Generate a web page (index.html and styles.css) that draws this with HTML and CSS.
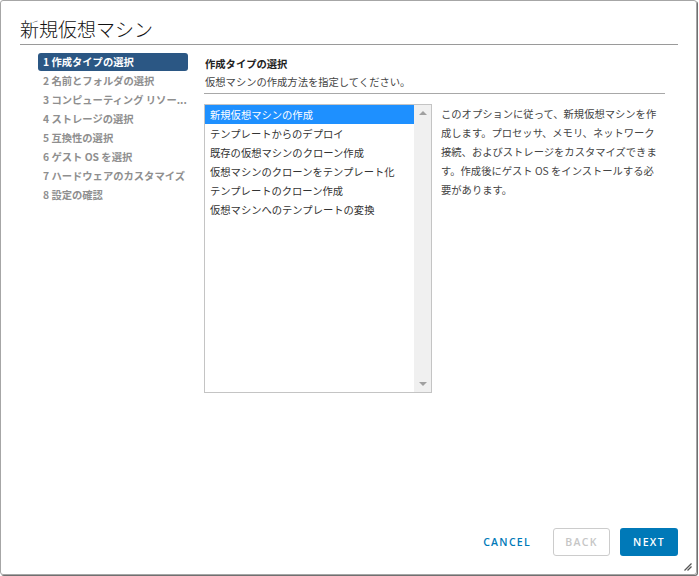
FILE: index.html
```html
<!DOCTYPE html>
<html lang="ja">
<head>
<meta charset="utf-8">
<title>新規仮想マシン</title>
<link rel="stylesheet" href="styles.css">
</head>
<body>
<div class="dialog">
  <header class="dlg-header">
    <h1 class="dlg-title">新規仮想マシン</h1>
  </header>
  <div class="dlg-body">
    <nav class="steps">
      <div class="step active">1 作成タイプの選択</div>
      <div class="step">2 名前とフォルダの選択</div>
      <div class="step" title="3 コンピューティング リソースの選択">3 コンピューティング リソー...</div>
      <div class="step">4 ストレージの選択</div>
      <div class="step">5 互換性の選択</div>
      <div class="step">6 ゲスト OS を選択</div>
      <div class="step">7 ハードウェアのカスタマイズ</div>
      <div class="step">8 設定の確認</div>
    </nav>
    <main class="content">
      <div class="content-head">
        <div class="content-title">作成タイプの選択</div>
        <div class="content-sub">仮想マシンの作成方法を指定してください。</div>
      </div>
      <div class="content-row">
        <div class="listbox">
          <ul class="options">
            <li class="selected">新規仮想マシンの作成</li>
            <li>テンプレートからのデプロイ</li>
            <li>既存の仮想マシンのクローン作成</li>
            <li>仮想マシンのクローンをテンプレート化</li>
            <li>テンプレートのクローン作成</li>
            <li>仮想マシンへのテンプレートの変換</li>
          </ul>
          <div class="scrollbar">
            <span class="arrow up"></span>
            <span class="arrow down"></span>
          </div>
        </div>
        <p class="desc">このオプションに従って、新規仮想マシンを作<br>成します。プロセッサ、メモリ、ネットワーク<br>接続、およびストレージをカスタマイズできま<br>す。作成後にゲスト OS をインストールする必<br>要があります。</p>
      </div>
    </main>
  </div>
  <footer class="dlg-footer">
    <button class="btn btn-link" type="button">Cancel</button>
    <button class="btn btn-outline" type="button" disabled>Back</button>
    <button class="btn btn-primary" type="button">Next</button>
  </footer>
  <svg class="grip" width="8" height="8" viewBox="0 0 8 8">
    <line x1="7.5" y1="0.5" x2="0.5" y2="7.5" stroke="#555" stroke-width="1.2"/>
    <line x1="7.5" y1="3.5" x2="3.5" y2="7.5" stroke="#555" stroke-width="1.2"/>
  </svg>
</div>
</body>
</html>
```
FILE: styles.css
```css
html, body {
  margin: 0;
  height: 100%;
  background: #fff;
}
body {
  font-family: "Noto Sans CJK JP", "Noto Sans", sans-serif;
  color: #333;
}
.dialog {
  position: relative;
  box-sizing: border-box;
  width: 697px;
  height: 575px;
  border: 1px solid #a6a6a6;
  border-radius: 3px;
  box-shadow: 1px 1px 0 #707070;
  display: flex;
  flex-direction: column;
}
.dlg-header {
  margin: 0 18px 0 19px;
  padding: 15px 0 2px;
  border-bottom: 1px solid #9a9a9a;
}
.dlg-title {
  margin: 0;
  font-family: "Noto Sans CJK JP Light", "Noto Sans CJK JP", sans-serif;
  font-size: 19px;
  font-weight: 300;
  line-height: 26px;
  color: #111;
}
.dlg-body {
  flex: 1;
  display: flex;
  gap: 16px;
  padding: 8px 31px 0 37px;
}
.steps {
  width: 150px;
  flex: none;
  display: flex;
  flex-direction: column;
  gap: 1px;
}
.step {
  height: 18px;
  line-height: 18px;
  padding: 0 0 0 5px;
  font-size: 10.3px;
  font-weight: 700;
  color: #8f8f8f;
  border-radius: 3px;
  white-space: nowrap;
}
.step.active {
  background: #2b5784;
  color: #fff;
}
.content {
  flex: 1;
  min-width: 0;
  display: flex;
  flex-direction: column;
}
.content-head {
  padding: 2px 0 2px 1px;
  border-bottom: 1px solid #a8a8a8;
}
.content-title {
  font-size: 10.3px;
  font-weight: 700;
  line-height: 18px;
  color: #222;
}
.content-sub {
  font-size: 10.3px;
  line-height: 18px;
  color: #444;
}
.content-row {
  display: flex;
  gap: 8px;
  margin-top: 10px;
}
.listbox {
  box-sizing: border-box;
  width: 228px;
  height: 289px;
  flex: none;
  border: 1px solid #c4c4c4;
  display: flex;
}
.options {
  list-style: none;
  margin: 0;
  padding: 0;
  flex: 1;
}
.options li {
  height: 19px;
  line-height: 19px;
  padding-left: 5px;
  font-size: 10.3px;
  color: #333;
  white-space: nowrap;
}
.options li.selected {
  background: #1e90ff;
  color: #fff;
}
.scrollbar {
  width: 17px;
  background: #f0f0f0;
  display: flex;
  flex-direction: column;
  justify-content: space-between;
  align-items: center;
  padding: 6px 0;
  box-sizing: border-box;
}
.arrow {
  width: 0;
  height: 0;
  border-left: 4px solid transparent;
  border-right: 4px solid transparent;
}
.arrow.up {
  border-bottom: 4px solid #a0a0a0;
}
.arrow.down {
  border-top: 4px solid #a0a0a0;
}
.desc {
  margin: 0;
  width: 222px;
  padding-left: 1px;
  font-size: 10.3px;
  line-height: 19px;
  color: #444;
  white-space: nowrap;
}
.dlg-footer {
  display: flex;
  justify-content: flex-end;
  align-items: center;
  gap: 10px;
  padding: 0 18px 18px 0;
}
.btn {
  box-sizing: border-box;
  height: 28px;
  padding: 0 11px;
  font-family: "Open Sans", Lato, sans-serif;
  font-size: 10.5px;
  font-weight: 600;
  letter-spacing: 1.3px;
  line-height: 26px;
  text-transform: uppercase;
  border: 1px solid transparent;
  border-radius: 3px;
  background: none;
  cursor: pointer;
}
.btn-link {
  color: #0079b8;
}
.btn-outline {
  width: 57px;
  border-color: #cccccc;
  color: #c6c6c6;
}
.btn-primary {
  width: 58px;
  background: #0079b8;
  color: #fff;
}
.grip {
  position: absolute;
  right: 4px;
  bottom: 3px;
}
```
